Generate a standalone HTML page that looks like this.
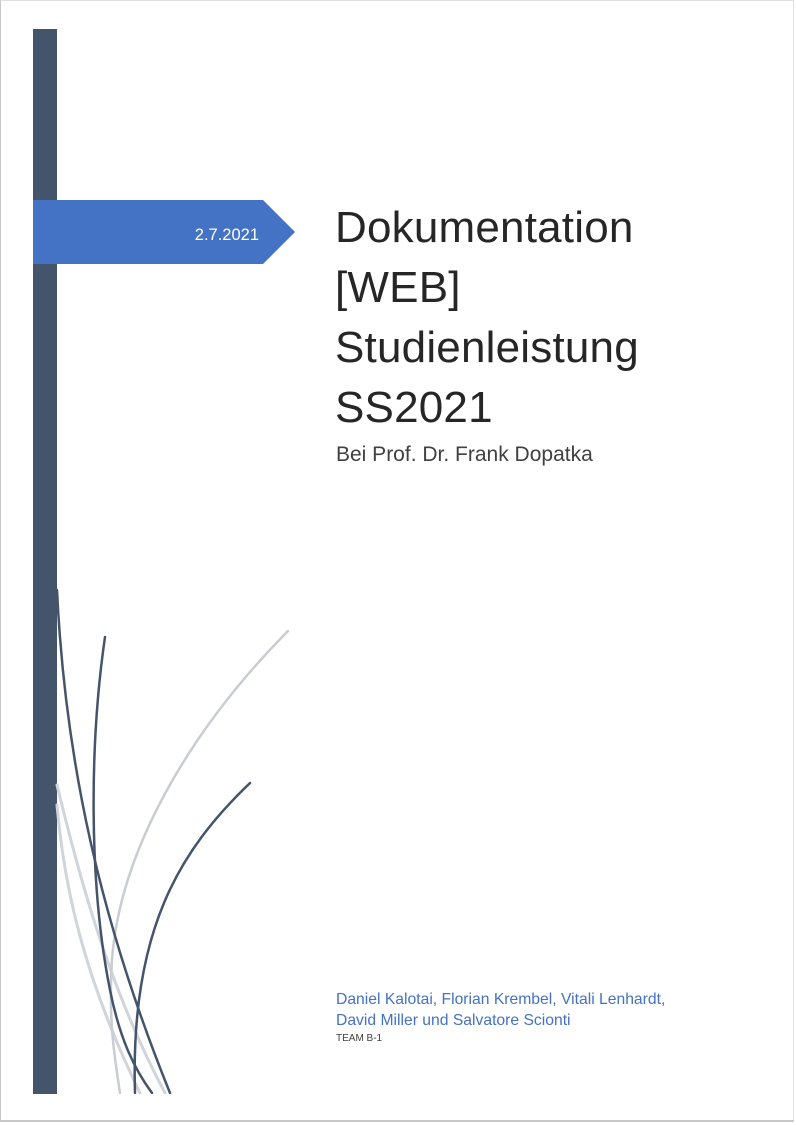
<!DOCTYPE html>
<html><head><meta charset="utf-8"><style>
body{margin:0;width:796px;height:1125px;background:#fff;position:relative;overflow:hidden;font-family:"Liberation Sans",sans-serif}
.pg{position:absolute;left:0;top:0;width:794px;height:1122px;border-left:1px solid #c8c8c8;border-bottom:2px solid #c8c8c8;border-right:1px solid #e0e0e0;border-top:1px solid #e0e0e0;box-sizing:border-box}
.bar{position:absolute;left:33px;top:29px;width:24px;height:1065px;background:#44546a}
.t{position:absolute;left:335px;color:#262626;font-size:44px;line-height:60px;top:198px;letter-spacing:0.2px}
.sub{position:absolute;left:336px;top:443px;font-size:21px;color:#404040}
.auth{position:absolute;left:336px;top:989px;font-size:15.7px;line-height:21px;color:#4472c4}
.team{position:absolute;left:336px;top:1033px;font-size:10px;color:#404040}
</style></head><body>
<div class="pg"></div>
<div class="bar"></div>
<svg style="position:absolute;left:0;top:0" width="796" height="1125">
<polygon points="33,200 263,200 295,232 263,264 33,264" fill="#4472c4"/>
<text x="259" y="240" text-anchor="end" fill="#fff" font-size="16.5" font-family="Liberation Sans,sans-serif">2.7.2021</text>
<g fill="none" stroke-linecap="round">
<path d="M57,805 C65,900 90,990 140,1093" stroke="#d0d4db" stroke-width="3"/>
<path d="M57,785 C80,880 110,990 165,1093" stroke="#d0d4db" stroke-width="3"/>
<path d="M288,631 C190,730 120,850 112,960 C108,1020 115,1060 120,1093" stroke="#c9ccd2" stroke-width="2.5"/>
<path d="M57,590 C65,760 100,920 170,1093" stroke="#44546a" stroke-width="2.5"/>
<path d="M105,637 C90,740 88,880 110,990 C120,1040 135,1070 152,1093" stroke="#44546a" stroke-width="2.5"/>
<path d="M250,783 C180,850 130,930 135,1093" stroke="#44546a" stroke-width="2.5"/>
</g>
<rect x="2" y="1094" width="300" height="26" fill="#fff"/>
</svg>
<div class="t">Dokumentation<br>[WEB]<br>Studienleistung<br>SS2021</div>
<div class="sub">Bei Prof. Dr. Frank Dopatka</div>
<div class="auth">Daniel Kalotai, Florian Krembel, Vitali Lenhardt,<br>David Miller und Salvatore Scionti</div>
<div class="team">TEAM B-1</div>
</body></html>
